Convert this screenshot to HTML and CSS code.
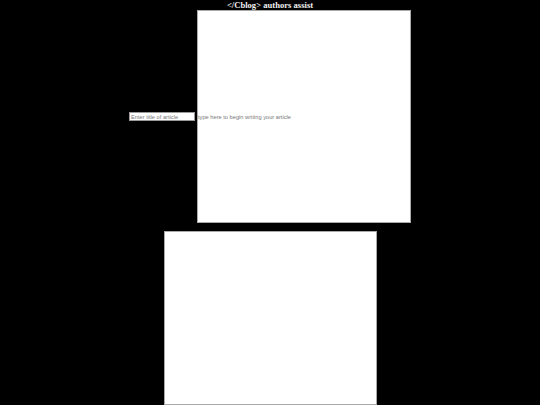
FILE: index.html
```html
<!DOCTYPE html>
<html>
<head>
<meta charset="utf-8">
<link rel="stylesheet" href="styles.css">
</head>
<body>
<h1 class="title">&lt;/Cblog&gt; authors assist</h1>
<div class="editor">
  <input class="title-input" type="text" placeholder="Enter title of article">
  <input class="body-input" type="text" placeholder="type here to begin writing your article">
</div>
<div class="preview"></div>
</body>
</html>
```
FILE: styles.css
```css
html, body {
  margin: 0;
  padding: 0;
  background: #000;
  height: 100%;
  overflow: hidden;
}
.title {
  margin: 0;
  height: 10px;
  line-height: 10px;
  font-family: "Liberation Serif", serif;
  font-weight: bold;
  font-size: 8.6px;
  color: #f0f0f0;
  text-align: center;
}
.editor {
  display: flex;
  justify-content: center;
  align-items: center;
  gap: 2px;
}
.title-input,
.body-input {
  box-sizing: border-box;
  margin: 0;
  padding: 0 1px;
  background: #fff;
  border: 1px solid #9a9a9a;
  font-family: "Liberation Sans", Arial, sans-serif;
  font-size: 5.7px;
  color: #222;
  outline: none;
}
.title-input {
  width: 66px;
  height: 9px;
}
.body-input {
  width: 214px;
  height: 213px;
  padding: 0;
  border-color: #aaa;
}
.title-input::placeholder,
.body-input::placeholder {
  color: #777;
}
.preview {
  width: 213px;
  height: 174px;
  margin: 8px auto 0;
  background: #fff;
  border: 1px solid #aaa;
  box-sizing: border-box;
}
```
